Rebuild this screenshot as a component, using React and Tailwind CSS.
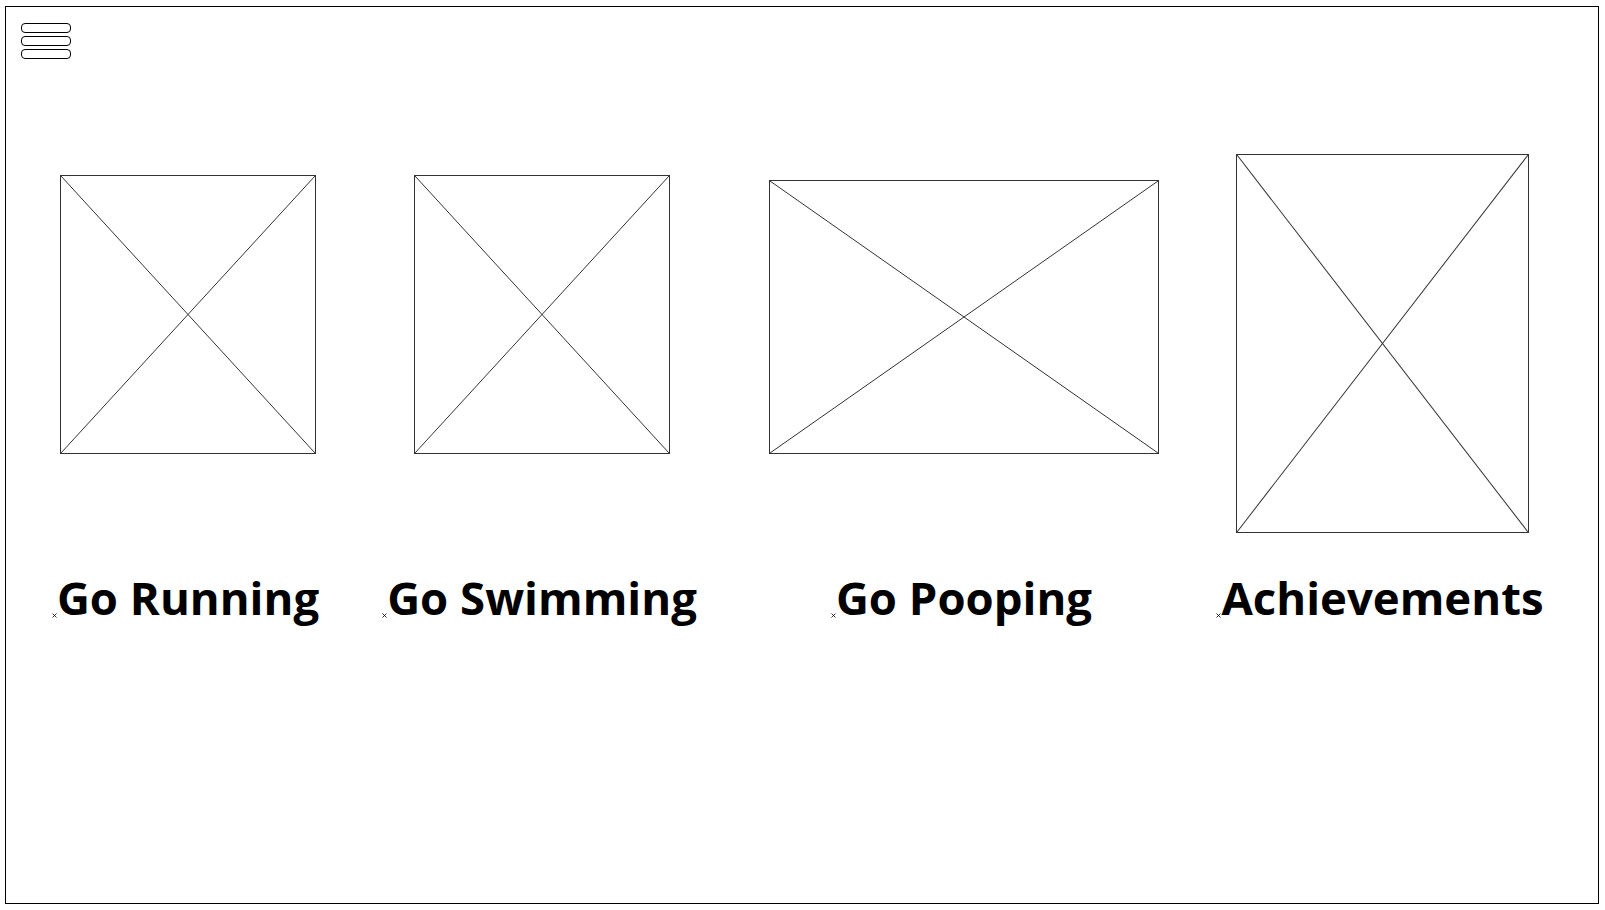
import React from "react";

function Marker() {
  return (
    <svg className="absolute left-[-5px] bottom-[3px]" width="5" height="5" viewBox="0 0 5 5">
      <path d="M0.5 0.5 L4.5 4.5 M4.5 0.5 L0.5 4.5" stroke="#000" strokeWidth="0.8" />
    </svg>
  );
}

function Placeholder({ w, h, mt }) {
  return (
    <div className={`relative border border-[#333] ${mt}`} style={{ width: w, height: h }}>
      <svg className="absolute inset-0" width="100%" height="100%" preserveAspectRatio="none" viewBox="0 0 100 100">
        <line x1="0" y1="0" x2="100" y2="100" stroke="#333" strokeWidth="1" vectorEffect="non-scaling-stroke" />
        <line x1="100" y1="0" x2="0" y2="100" stroke="#333" strokeWidth="1" vectorEffect="non-scaling-stroke" />
      </svg>
    </div>
  );
}

function Column({ w, h, mt, label, className }) {
  return (
    <div className={`flex flex-col items-center shrink-0 ${className}`} style={{ width: w }}>
      <div className="h-[379px] flex flex-col items-center">
        <Placeholder w={w} h={h} mt={mt} />
      </div>
      <div className="relative mt-[42px] whitespace-nowrap text-[45.5px] leading-none font-bold text-black" style={{ fontFamily: '"Open Sans", "Noto Sans", sans-serif' }}>
        <Marker />
        {label}
      </div>
    </div>
  );
}

export default function App() {
  return (
    <div className="w-[1605px] h-[910px] bg-white overflow-hidden">
      <div className="ml-[5px] mt-[6px] w-[1594px] h-[898px] border border-black">
        <div className="ml-[15px] mt-[16px] flex flex-col gap-[3px] w-[50px]">
          <div className="h-[10px] border border-black rounded-[4px]" />
          <div className="h-[10px] border border-black rounded-[4px]" />
          <div className="h-[10px] border border-black rounded-[4px]" />
        </div>
        <div className="mt-[95px] ml-[54px] flex items-start">
          <Column w={256} h={279} mt="mt-[21px]" label="Go Running" />
          <Column w={256} h={279} mt="mt-[21px]" label="Go Swimming" className="ml-[98px]" />
          <Column w={390} h={274} mt="mt-[26px]" label="Go Pooping" className="ml-[99px]" />
          <Column w={293} h={379} mt="mt-0" label="Achievements" className="ml-[77px]" />
        </div>
      </div>
    </div>
  );
}
